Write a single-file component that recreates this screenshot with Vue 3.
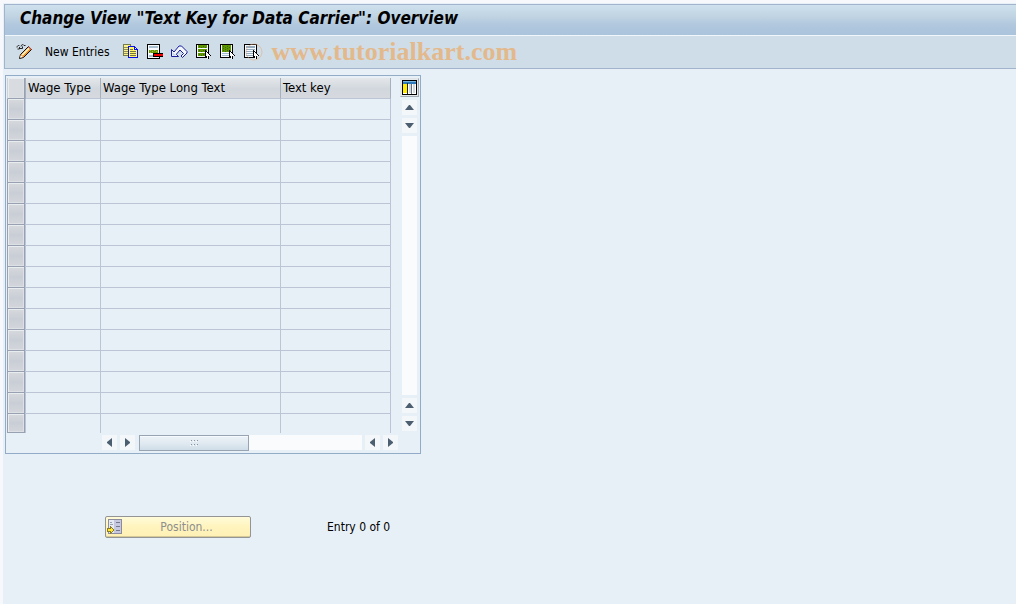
<script setup>
const rows = Array.from({ length: 16 }, (_, i) => i + 1)
</script>

<template>
  <div class="page">
    <main class="screen">
      <header class="head">
        <h1 class="title">Change View "Text Key for Data Carrier": Overview</h1>
        <div class="toolbar" role="toolbar" aria-label="Application toolbar">
          <button class="tool" type="button" aria-label="Display / change">
            <svg width="17" height="16" viewBox="0 0 17 16">
              <path d="M1 3.5C1 1.500 3 1 3.500 2M1.500 5h2V3M4 4.500h2.500V2.500M5 2.500C5 .5 7.500 0 8 1.500M8 1.500h1.500" fill="none" stroke="#222" />
              <path d="M3.500 14.500L4.500 10.500L12.500 2.500L15.500 5.500L7.500 13.500z" fill="#f28a1c" stroke="#111" />
              <path d="M5.500 10.500L12.500 3.500L13.800 4.800L6.800 11.800z" fill="#fff3c4" />
              <path d="M12 3L13 2.500L15.500 5L15 6z" fill="#c9564b" />
              <path d="M4 13.800L4.800 11L7 13z" fill="#fff" />
            </svg>
          </button>
          <button class="tool words" type="button">New Entries</button>
          <button class="tool" type="button" aria-label="Copy as">
            <svg width="16" height="16" viewBox="0 0 16 16" shape-rendering="crispEdges">
              <path d="M0 0h8v12H0z" fill="#777d48" />
              <path d="M1 1h6v10H1z" fill="#fbf391" />
              <path d="M1 3h4v1H1zM1 5h4v1H1zM1 7h4v1H1zM1 9h4v1H1z" fill="#8d8d58" />
              <path d="M5 2h7v1h1v1h1v1h1v9H5z" fill="#0710e8" />
              <path d="M6 3h5v3h3v7H6z" fill="#fff66a" />
              <path d="M12 4h1v1h-1z" fill="#fff" />
              <path d="M7 5h3v1H7zM7 7h6v1H7zM7 9h6v1H7zM7 11h6v1H7z" fill="#77753f" />
            </svg>
          </button>
          <button class="tool" type="button" aria-label="Delete">
            <svg width="16" height="16" viewBox="0 0 16 16" shape-rendering="crispEdges">
              <path d="M0 0h13v15H0z" fill="#000" />
              <path d="M1 1h11v13H1z" fill="#f7fbff" />
              <path d="M2 2h9v2H2zM2 11h9v2H2z" fill="#a9c0d1" />
              <path d="M2 6h9v3H2z" fill="#6b9a00" />
              <path d="M3 6h1v1H3zM5 7h1v1H5zM7 6h1v1H7zM9 7h1v1H9zM3 8h1v1H3z" fill="#a3bd65" />
              <path d="M6 9h10v4H6z" fill="#000" />
              <path d="M7 10h9v2H7z" fill="#f00000" />
            </svg>
          </button>
          <button class="tool" type="button" aria-label="Undo change">
            <svg width="17" height="16" viewBox="0 0 17 16">
              <path d="M.5 5.500v7h7l-2.200-2.200L9 6l3.500 3.500L10 12l1.500 1.500L16 9V7.500L10.500 2H8L3 8z" fill="#f3f7fd" stroke="#181c9c" stroke-width="1" stroke-linejoin="bevel" />
              <path d="M1.500 8v3.500H5z" fill="#bfd5e8" />
            </svg>
          </button>
          <button class="tool" type="button" aria-label="Select all">
            <svg width="16" height="16" viewBox="0 0 16 16" shape-rendering="crispEdges">
              <path d="M0 0h13v14H0z" fill="#000" />
              <path d="M1 1h11v12H1z" fill="#f4faff" />
              <path d="M2 1h9v3H2zM2 5h9v3H2zM2 9h9v3H2z" fill="#5f9600" />
              <path d="M3 2h1v1H3zM5 3h1v1H5zM7 2h1v1H7zM9 3h1v1H9zM3 6h1v1H3zM5 7h1v1H5zM7 6h1v1H7zM3 10h1v1H3zM5 11h1v1H5zM7 10h1v1H7z" fill="#386b00" />
              <path d="M9 6h1v1h1v1h1v1h1v1h1v1h1v1h-2v3h-2v-2h-1v1H9z" fill="#000" />
              <path d="M10 8h1v1h1v1h1v1h1v1h-2v3h-1v-3h-1z" fill="#fff" />
            </svg>
          </button>
          <button class="tool" type="button" aria-label="Select block">
            <svg width="16" height="16" viewBox="0 0 16 16" shape-rendering="crispEdges">
              <path d="M0 0h13v14H0z" fill="#000" />
              <path d="M1 1h11v12H1z" fill="#f4faff" />
              <path d="M2 1h9v7H2z" fill="#5f9600" />
              <path d="M3 2h1v1H3zM5 3h1v1H5zM7 2h1v1H7zM9 3h1v1H9zM3 4h1v1H3zM5 5h1v1H5zM7 4h1v1H7zM3 6h1v1H3zM5 7h1v1H5zM7 6h1v1H7z" fill="#386b00" />
              <path d="M2 9h8v1H2zM2 11h8v1H2z" fill="#9eb8cd" />
              <path d="M9 6h1v1h1v1h1v1h1v1h1v1h1v1h-2v3h-2v-2h-1v1H9z" fill="#000" />
              <path d="M10 8h1v1h1v1h1v1h1v1h-2v3h-1v-3h-1z" fill="#fff" />
            </svg>
          </button>
          <button class="tool" type="button" aria-label="Deselect all">
            <svg class="wide" width="16" height="16" viewBox="0 0 16 16" shape-rendering="crispEdges">
              <path d="M0 0h13v14H0z" fill="#000" />
              <path d="M1 1h11v12H1z" fill="#f4faff" />
              <path d="M2 2h9v2H2zM2 5h9v1H2zM2 7h9v1H2zM2 9h9v1H2zM2 11h9v1H2z" fill="#94aabd" />
              <circle cx="10" cy="8" r="8" fill="none" stroke="#e4a878" stroke-opacity=".5" shape-rendering="auto" />
              <path d="M9 6h1v1h1v1h1v1h1v1h1v1h1v1h-2v3h-2v-2h-1v1H9z" fill="#000" />
              <path d="M10 8h1v1h1v1h1v1h1v1h-2v3h-1v-3h-1z" fill="#fff" />
            </svg>
          </button>
          <span class="mark">www.tutorialkart.com</span>
        </div>
      </header>

      <section class="panel" aria-label="Text keys">
        <table class="grid">
          <colgroup>
            <col class="c-sel" /><col class="c-type" /><col class="c-long" /><col class="c-key" />
          </colgroup>
          <thead>
            <tr>
              <th class="sel" scope="col"><button type="button" class="rowbtn top" aria-label="Select all rows"></button></th>
              <th scope="col">Wage Type</th>
              <th scope="col">Wage Type Long Text</th>
              <th scope="col">Text key</th>
            </tr>
          </thead>
          <tbody>
            <tr v-for="r in rows" :key="r">
              <td class="sel"><button type="button" class="rowbtn" :aria-label="`Select row ${r}`"></button></td>
              <td></td>
              <td></td>
              <td></td>
            </tr>
          </tbody>
        </table>

        <div class="vside">
          <button class="config" type="button" aria-label="Configuration">
            <svg width="15" height="15" viewBox="0 0 15 15" shape-rendering="crispEdges">
              <path d="M0 0h15v15H0z" fill="#000" />
              <path d="M1 1h13v13H1z" fill="#fff" />
              <path d="M1 1h13v3H1z" fill="#2c79b9" />
              <path d="M1 1h13v1H1z" fill="#78b5df" />
              <path d="M1 4h4v9H1z" fill="#ffec00" />
              <path d="M7 4h2v9H7zM11 4h2v9h-2z" fill="#d2d8df" />
              <path d="M5 3h1v11H5z" fill="#222" />
              <path d="M9 4h1v10H9z" fill="#68727d" />
            </svg>
          </button>
          <button class="arrow" type="button" aria-label="First row"><svg width="9" height="5"><path d="M0 5h9L5 0H4z" /></svg></button>
          <button class="arrow" type="button" aria-label="Row up"><svg width="9" height="5"><path d="M0 0h9L5 5H4z" /></svg></button>
          <div class="track"></div>
          <button class="arrow" type="button" aria-label="Row down"><svg width="9" height="5"><path d="M0 5h9L5 0H4z" /></svg></button>
          <button class="arrow" type="button" aria-label="Last row"><svg width="9" height="5"><path d="M0 0h9L5 5H4z" /></svg></button>
        </div>

        <div class="hside">
          <button class="arrow" type="button" aria-label="First column"><svg width="5" height="9"><path d="M5 0v9L0 5V4z" /></svg></button>
          <button class="arrow" type="button" aria-label="Column left"><svg width="5" height="9"><path d="M0 0v9l5-4V4z" /></svg></button>
          <div class="htrack">
            <div class="thumb">
              <svg width="9" height="6" viewBox="0 0 9 6" shape-rendering="crispEdges">
                <path d="M1 0h1v1H1zM4 0h1v1H4zM7 0h1v1H7zM1 4h1v1H1zM4 4h1v1H4zM7 4h1v1H7z" fill="#8795a5" />
                <path d="M0 1h1v1H0zM3 1h1v1H3zM6 1h1v1H6zM0 5h1v1H0zM3 5h1v1H3zM6 5h1v1H6z" fill="#fff" />
              </svg>
            </div>
          </div>
          <button class="arrow" type="button" aria-label="Column right"><svg width="5" height="9"><path d="M5 0v9L0 5V4z" /></svg></button>
          <button class="arrow" type="button" aria-label="Last column"><svg width="5" height="9"><path d="M0 0v9l5-4V4z" /></svg></button>
        </div>
      </section>

      <footer class="foot">
        <button class="position" type="button" disabled>
          <svg width="16" height="16" viewBox="0 0 16 16" shape-rendering="crispEdges">
            <path d="M1 0h14v15H1z" fill="#8c8c9c" />
            <path d="M2 1h5v13H2z" fill="#e5e9f1" />
            <path d="M7 1h7v13H7z" fill="#c5c8de" />
            <path d="M9 3h4v1H9zM9 7h4v1H9zM9 11h4v1H9z" fill="#77778d" />
            <path d="M3 3h2v1H3zM3 5h3v1H3z" fill="#9aa0ae" />
            <path d="M0 9h3V7h1v1h1v1h1v1h1v2H6v1H5v1H4v1H3v-2H0z" fill="#8b7a28" />
            <path d="M1 10h3V9h1v1h1v2H5v1H4v-1H1z" fill="#ffe838" />
          </svg>
          <span>Position...</span>
        </button>
        <span class="entry">Entry 0 of 0</span>
      </footer>
    </main>
  </div>
</template>

<style>
body {
  background: #f6f8fc;
}
</style>

<style scoped>
.page {
  min-height: 100vh;
  box-sizing: border-box;
  padding: 3px 0 0 3px;
  display: flex;
  font: 12px/16px "DejaVu Sans Condensed", "DejaVu Sans", sans-serif;
  font-stretch: condensed;
  color: #000;
}
.screen {
  flex: 1;
  background: #e8f0f7;
  padding: 1px 0 0 1px;
}
button {
  font: inherit;
  color: inherit;
  margin: 0;
  padding: 0;
  border: 0;
  background: none;
  display: flex;
  align-items: center;
  justify-content: center;
  box-sizing: border-box;
}
svg {
  display: block;
  flex: none;
}
.wide {
  overflow: visible;
}
.head {
  border: 1px solid #a2b4cc;
  border-right: 0;
}
.title {
  margin: 0;
  padding-left: 15px;
  height: 30px;
  font-size: 17px;
  line-height: 27px;
  font-weight: bold;
  font-style: italic;
  white-space: nowrap;
  background: linear-gradient(#cfe1ed, #bfd3e2 40%, #b1c8de 65%, #abc3dc);
}
.toolbar {
  display: flex;
  align-items: center;
  gap: 8px;
  height: 33px;
  box-sizing: border-box;
  padding: 0 11px;
  border-top: 1px solid #f0f6fa;
  background: #cfdde8;
}
.words {
  margin: 0 5px 0 4px;
}
.mark {
  margin-left: 4px;
  font: bold 26px/30px "Liberation Serif", serif;
  color: #e3b98c;
}
.panel {
  margin: 6px 0 0 1px;
  width: max-content;
  display: grid;
  grid-template-columns: auto 19px;
  column-gap: 9px;
  padding: 2px 1px;
  border: 1px solid #92abc6;
}
.grid {
  border-collapse: separate;
  border-spacing: 0;
  table-layout: fixed;
  width: 384px;
}
.c-sel { width: 19px; }
.c-type { width: 75px; }
.c-long { width: 180px; }
.c-key { width: 110px; }
th,
td {
  box-sizing: border-box;
  height: 21px;
  padding: 0;
  border-right: 1px solid #bcc5d5;
  border-bottom: 1px solid #bcc5d5;
}
th {
  padding-left: 2px;
  text-align: left;
  font-size: 13px;
  font-weight: normal;
  white-space: nowrap;
  border-right-color: #a6b0be;
  background: linear-gradient(#e3e7ea, #d2d7dd 55%, #d6dadf);
}
tbody tr:last-child td {
  height: 19px;
  border-bottom: 0;
}
th.sel,
td.sel {
  padding: 0;
  border-bottom: 0;
}
.rowbtn {
  width: 18px;
  height: 21px;
  border: 1px solid #98a1b1;
  border-top: 0;
  background: linear-gradient(#d6dade, #c9cdd5 50%, #d3d7dc);
  box-shadow: inset 1px 1px #e9edf0, inset -1px -1px #dde1e6;
}
.rowbtn.top {
  border-color: #cbd2da #98a1b1 #98a1b1 #cbd2da;
  background: #d8dce1;
}
tbody tr:last-child .rowbtn {
  height: 19px;
}
.vside {
  display: flex;
  flex-direction: column;
  align-items: center;
  gap: 3px;
  padding-bottom: 2px;
}
.config {
  width: 19px;
  height: 19px;
  border: 1px solid #dfe4e8;
  border-right-color: #a0a8b3;
  border-bottom-color: #a0a8b3;
  background: #e6e9ec;
}
.arrow {
  width: 15px;
  height: 15px;
  background: #f4f7fa;
}
.arrow path {
  fill: #4c5f70;
}
.track {
  flex: 1;
  width: 15px;
  background: #fafbfc;
}
.hside {
  display: flex;
  align-items: center;
  gap: 3px;
  padding-left: 95px;
  margin-right: -7px;
  height: 18px;
}
.htrack {
  flex: 1;
  margin-left: 1px;
  height: 15px;
  background: #fafbfc;
}
.thumb {
  display: flex;
  align-items: center;
  justify-content: center;
  box-sizing: border-box;
  width: 110px;
  height: 16px;
  border: 1px solid #98a4b2;
  background: linear-gradient(#edf3f8, #e1eaf1 50%, #cfdde8);
  box-shadow: inset 0 1px #f7fafc;
}
.foot {
  display: flex;
  align-items: center;
  gap: 76px;
  margin: 62px 0 0 101px;
}
.position {
  width: 146px;
  height: 22px;
  padding: 0 2px 1px 1px;
  border: 1px solid #949494;
  border-radius: 2px;
  color: #8e8e8e;
  background: linear-gradient(#fffbd9, #fff4bd 50%, #ffefb5);
  box-shadow: inset 0 -1px #d5c998;
}
.position span {
  flex: 1;
  padding-left: 2px;
  text-align: center;
}
</style>
